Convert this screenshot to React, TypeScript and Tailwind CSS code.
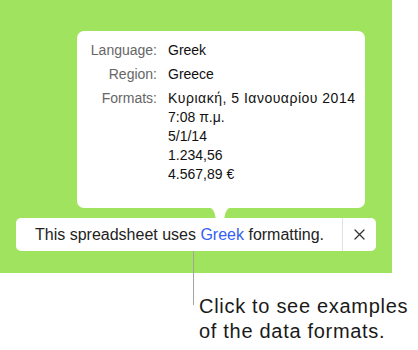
import React from "react";

const font = { fontFamily: '"Liberation Sans", Arial, sans-serif' };

export default function App() {
  return (
    <div className="relative w-[418px] h-[350px] bg-white overflow-hidden" style={font}>
      <div className="relative w-[392px] h-[273px] bg-[#9fe35f] pt-[31px]">
        <div className="ml-[77px] w-[288px] h-[177px] rounded-[7px] bg-white pt-[10px] text-[14px] leading-[19px]">
          <div className="grid grid-cols-[80px_1fr] gap-x-[11px] gap-y-[5px]">
            <div className="text-right text-[#666666]">Language:</div>
            <div className="text-[#111111]">Greek</div>
            <div className="text-right text-[#666666]">Region:</div>
            <div className="text-[#111111]">Greece</div>
            <div className="text-right text-[#666666]">Formats:</div>
            <div className="flex flex-col text-[#111111]">
              <span className="tracking-[0.5px]">Κυριακή, 5 Ιανουαρίου 2014</span>
              <span>7:08 π.μ.</span>
              <span>5/1/14</span>
              <span>1.234,56</span>
              <span>4.567,89 €</span>
            </div>
          </div>
        </div>
        <div className="ml-[16px] mt-[10px] w-[360px] h-[33px] rounded-[5px] bg-white flex items-center">
          <div className="flex-1 pl-[19px] text-[16px] text-[#222222] whitespace-nowrap">
            This spreadsheet uses <span className="text-[#3460f0]">Greek</span> formatting.
          </div>
          <div className="w-px h-full bg-[#e2e2e2]" />
          <div className="w-[33px] h-full flex items-center justify-center">
            <svg width="11" height="11" viewBox="0 0 11 11">
              <path d="M1 1 L10 10 M10 1 L1 10" stroke="#333" strokeWidth="1.3" strokeLinecap="round" />
            </svg>
          </div>
        </div>
        <svg className="absolute left-[206px] top-[207px]" width="28" height="14" viewBox="0 0 28 14">
          <path d="M0 0 C8 0 9 6 10 14 L18 14 C19 6 20 0 28 0 Z" fill="white" />
        </svg>
      </div>
      <div className="absolute left-[192.5px] top-[251px] w-[1.5px] h-[54px] bg-[#a3a3a3]" />
      <div className="mt-[21px] pl-[199px] text-[20px] leading-[25px] tracking-[0.7px] text-[#1a1a1a] whitespace-nowrap">
        <div>Click to see examples</div>
        <div>of the data formats.</div>
      </div>
    </div>
  );
}
